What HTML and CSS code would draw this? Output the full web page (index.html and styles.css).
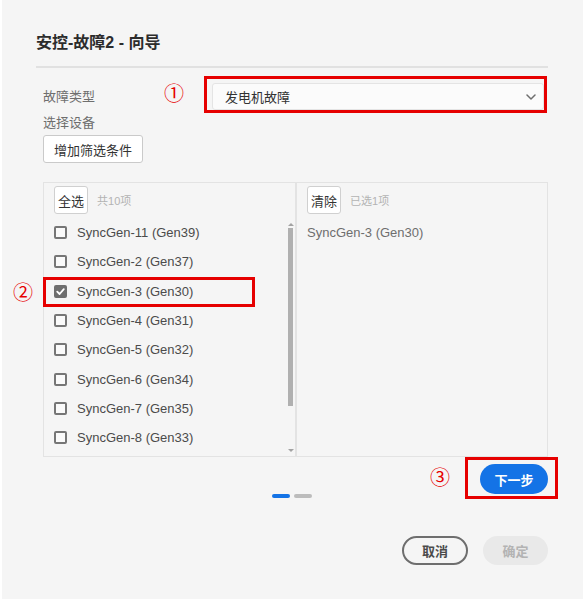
FILE: index.html
```html
<!DOCTYPE html>
<html lang="zh">
<head>
<meta charset="utf-8">
<title>安控-故障2 - 向导</title>
<link rel="stylesheet" href="styles.css">
</head>
<body>
<div class="dialog">
  <h1 class="title">安控-故障2 - 向导</h1>
  <div class="divider"></div>
  <div class="form">
    <div class="row-type">
      <span class="label label-type">故障类型</span>
      <div class="select">
        <span class="select-value">发电机故障</span>
        <svg class="chevron" width="10" height="6" viewBox="0 0 10 6"><path d="M1 1 L5 5 L9 1" fill="none" stroke="#6e6e6e" stroke-width="1.5" stroke-linecap="round" stroke-linejoin="round"/></svg>
      </div>
    </div>
    <div class="label label-device">选择设备</div>
    <button class="btn-outline">增加筛选条件</button>
    <div class="transfer">
      <div class="panel panel-left">
        <div class="panel-head"><button class="btn-small">全选</button><span class="count">共10项</span></div>
        <div class="list-wrap">
          <ul class="list">
            <li class="item"><span class="cb"></span>SyncGen-11 (Gen39)</li>
            <li class="item"><span class="cb"></span>SyncGen-2 (Gen37)</li>
            <li class="item"><span class="cb cb-on"><svg width="13" height="13" viewBox="0 0 13 13"><path d="M3.2 6.6 L5.6 9 L9.8 4.2" fill="none" stroke="#fff" stroke-width="1.8" stroke-linecap="round" stroke-linejoin="round"/></svg></span>SyncGen-3 (Gen30)</li>
            <li class="item"><span class="cb"></span>SyncGen-4 (Gen31)</li>
            <li class="item"><span class="cb"></span>SyncGen-5 (Gen32)</li>
            <li class="item"><span class="cb"></span>SyncGen-6 (Gen34)</li>
            <li class="item"><span class="cb"></span>SyncGen-7 (Gen35)</li>
            <li class="item"><span class="cb"></span>SyncGen-8 (Gen33)</li>
          </ul>
          <div class="scrollbar">
            <span class="arrow-up"></span>
            <div class="track"><div class="thumb"></div></div>
            <span class="arrow-down"></span>
          </div>
        </div>
      </div>
      <div class="panel panel-right">
        <div class="panel-head"><button class="btn-small">清除</button><span class="count">已选1项</span></div>
        <div class="selected-item">SyncGen-3 (Gen30)</div>
      </div>
    </div>
    <div class="next-row"><button class="btn-next">下一步</button></div>
  </div>
  <div class="dots"><span class="dot dot-active"></span><span class="dot"></span></div>
  <div class="footer">
    <button class="btn-cancel">取消</button>
    <button class="btn-ok">确定</button>
  </div>

  <div class="anno-box anno-box-1"></div>
  <div class="anno-box anno-box-2"></div>
  <div class="anno-box anno-box-3"></div>
  <span class="anno-num anno-num-1">①</span>
  <span class="anno-num anno-num-2">②</span>
  <span class="anno-num anno-num-3">③</span>
</div>
</body>
</html>
```
FILE: styles.css
```css
html, body {
  margin: 0;
  padding: 0;
  background: #ffffff;
}
body {
  font-family: "Liberation Sans", "Noto Sans CJK SC", sans-serif;
  font-size: 13px;
  color: #4b4b4b;
}
.dialog {
  position: relative;
  margin-left: 2px;
  width: 581px;
  height: 599px;
  box-sizing: border-box;
  padding: 32px 35px 0 34px;
  background: #f5f5f5;
}
.title {
  margin: 0;
  font-size: 16px;
  line-height: 22px;
  font-weight: bold;
  color: #2c2c2c;
}
.divider {
  margin-top: 12px;
  height: 2px;
  background: #e1e1e1;
}
.form {
  padding-left: 7px;
}
.row-type {
  margin-top: 15px;
  display: flex;
  align-items: center;
  height: 27px;
}
.label {
  font-size: 13px;
  color: #6e6e6e;
  line-height: 18px;
}
.label-type {
  width: 169px;
  flex: 0 0 169px;
}
.select {
  flex: 1;
  margin-right: 4px;
  height: 27px;
  box-sizing: border-box;
  display: flex;
  align-items: center;
  justify-content: space-between;
  padding: 0 7px 0 12px;
  background: #fbfbfb;
  border: 1px solid #e4e4e4;
  border-radius: 3px;
}
.select-value {
  font-size: 13px;
  color: #323232;
}
.chevron {
  display: block;
}
.label-device {
  margin-top: 4px;
}
button {
  font-family: "Liberation Sans", "Noto Sans CJK SC", sans-serif;
  cursor: pointer;
}
.btn-outline {
  display: block;
  margin-top: 3px;
  height: 28px;
  padding: 0 10px;
  border: 1px solid #cacaca;
  border-radius: 3px;
  background: #ffffff;
  font-size: 13px;
  color: #333333;
}
.transfer {
  margin-top: 19px;
  display: flex;
  height: 275px;
}
.panel {
  box-sizing: border-box;
  border: 1px solid #e3e3e3;
  display: flex;
  flex-direction: column;
}
.panel-left {
  flex: 0 0 253px;
}
.panel-right {
  flex: 1;
}
.panel-head {
  display: flex;
  align-items: center;
  gap: 9px;
  padding: 3px 10px 4px;
}
.btn-small {
  height: 28px;
  padding: 0 3px;
  border: 1px solid #d0d0d0;
  border-radius: 3px;
  background: #ffffff;
  font-size: 13px;
  color: #333333;
}
.count {
  font-size: 11px;
  color: #b3b3b3;
}
.list-wrap {
  display: flex;
  flex: 1;
  min-height: 0;
}
.list {
  flex: 1;
  margin: 0;
  padding: 0;
  list-style: none;
  overflow: hidden;
}
.item {
  height: 29.3px;
  display: flex;
  align-items: center;
  gap: 10px;
  padding-left: 10px;
  font-size: 13px;
  color: #4b4b4b;
  white-space: nowrap;
}
.cb {
  width: 13px;
  height: 13px;
  flex: 0 0 13px;
  box-sizing: border-box;
  border: 2px solid #767676;
  border-radius: 2px;
  background: #fafafa;
  position: relative;
}
.cb-on {
  background: #6e6e6e;
  border-color: #6e6e6e;
}
.cb-on svg {
  position: absolute;
  left: -2px;
  top: -2px;
}
.scrollbar {
  width: 7px;
  margin-right: 1px;
  display: flex;
  flex-direction: column;
  align-items: center;
}
.arrow-up {
  margin-top: 5px;
  width: 0;
  height: 0;
  border-left: 3px solid transparent;
  border-right: 3px solid transparent;
  border-bottom: 3px solid #a3a3a3;
}
.track {
  flex: 1;
  width: 100%;
  display: flex;
  justify-content: center;
}
.thumb {
  margin-top: 2px;
  width: 5px;
  height: 178px;
  background: #b0b0b0;
}
.arrow-down {
  margin-bottom: 4px;
  width: 0;
  height: 0;
  border-left: 3px solid transparent;
  border-right: 3px solid transparent;
  border-top: 3px solid #a3a3a3;
}
.selected-item {
  height: 29.3px;
  display: flex;
  align-items: center;
  padding-left: 10px;
  font-size: 13px;
  color: #6e6e6e;
}
.next-row {
  display: flex;
  justify-content: flex-end;
  margin-top: 7px;
}
.btn-next {
  width: 68px;
  height: 30px;
  padding: 0;
  border: none;
  border-radius: 15px;
  background: #1473e6;
  color: #ffffff;
  font-size: 13px;
  font-weight: bold;
}
.dots {
  display: flex;
  justify-content: center;
  gap: 4px;
  height: 4px;
}
.dot {
  width: 18px;
  height: 4px;
  border-radius: 2px;
  background: #bcbcbc;
}
.dot-active {
  background: #1473e6;
}
.footer {
  display: flex;
  justify-content: flex-end;
  gap: 15px;
  margin-top: 38px;
}
.btn-cancel {
  width: 66px;
  height: 29px;
  padding: 0;
  box-sizing: border-box;
  border: 2px solid #6e6e6e;
  border-radius: 15px;
  background: transparent;
  color: #4b4b4b;
  font-size: 13px;
  font-weight: bold;
}
.btn-ok {
  width: 65px;
  height: 29px;
  padding: 0;
  border: none;
  border-radius: 15px;
  background: #e9e9e9;
  color: #b3b3b3;
  font-size: 13px;
  font-weight: bold;
}
.anno-box {
  position: absolute;
  box-sizing: border-box;
  border: 3px solid #e60000;
}
.anno-box-1 {
  left: 202px;
  top: 76px;
  width: 343px;
  height: 37px;
}
.anno-box-2 {
  left: 41px;
  top: 277px;
  width: 212px;
  height: 30px;
}
.anno-box-3 {
  left: 463px;
  top: 457px;
  width: 93px;
  height: 42px;
}
.anno-num {
  position: absolute;
  width: 24px;
  height: 20px;
  line-height: 20px;
  text-align: center;
  font-family: "Noto Sans CJK SC", sans-serif;
  font-size: 20px;
  color: #e60000;
}
.anno-num-1 {
  left: 160px;
  top: 83px;
}
.anno-num-2 {
  left: 9px;
  top: 282px;
}
.anno-num-3 {
  left: 426px;
  top: 467px;
}
```
